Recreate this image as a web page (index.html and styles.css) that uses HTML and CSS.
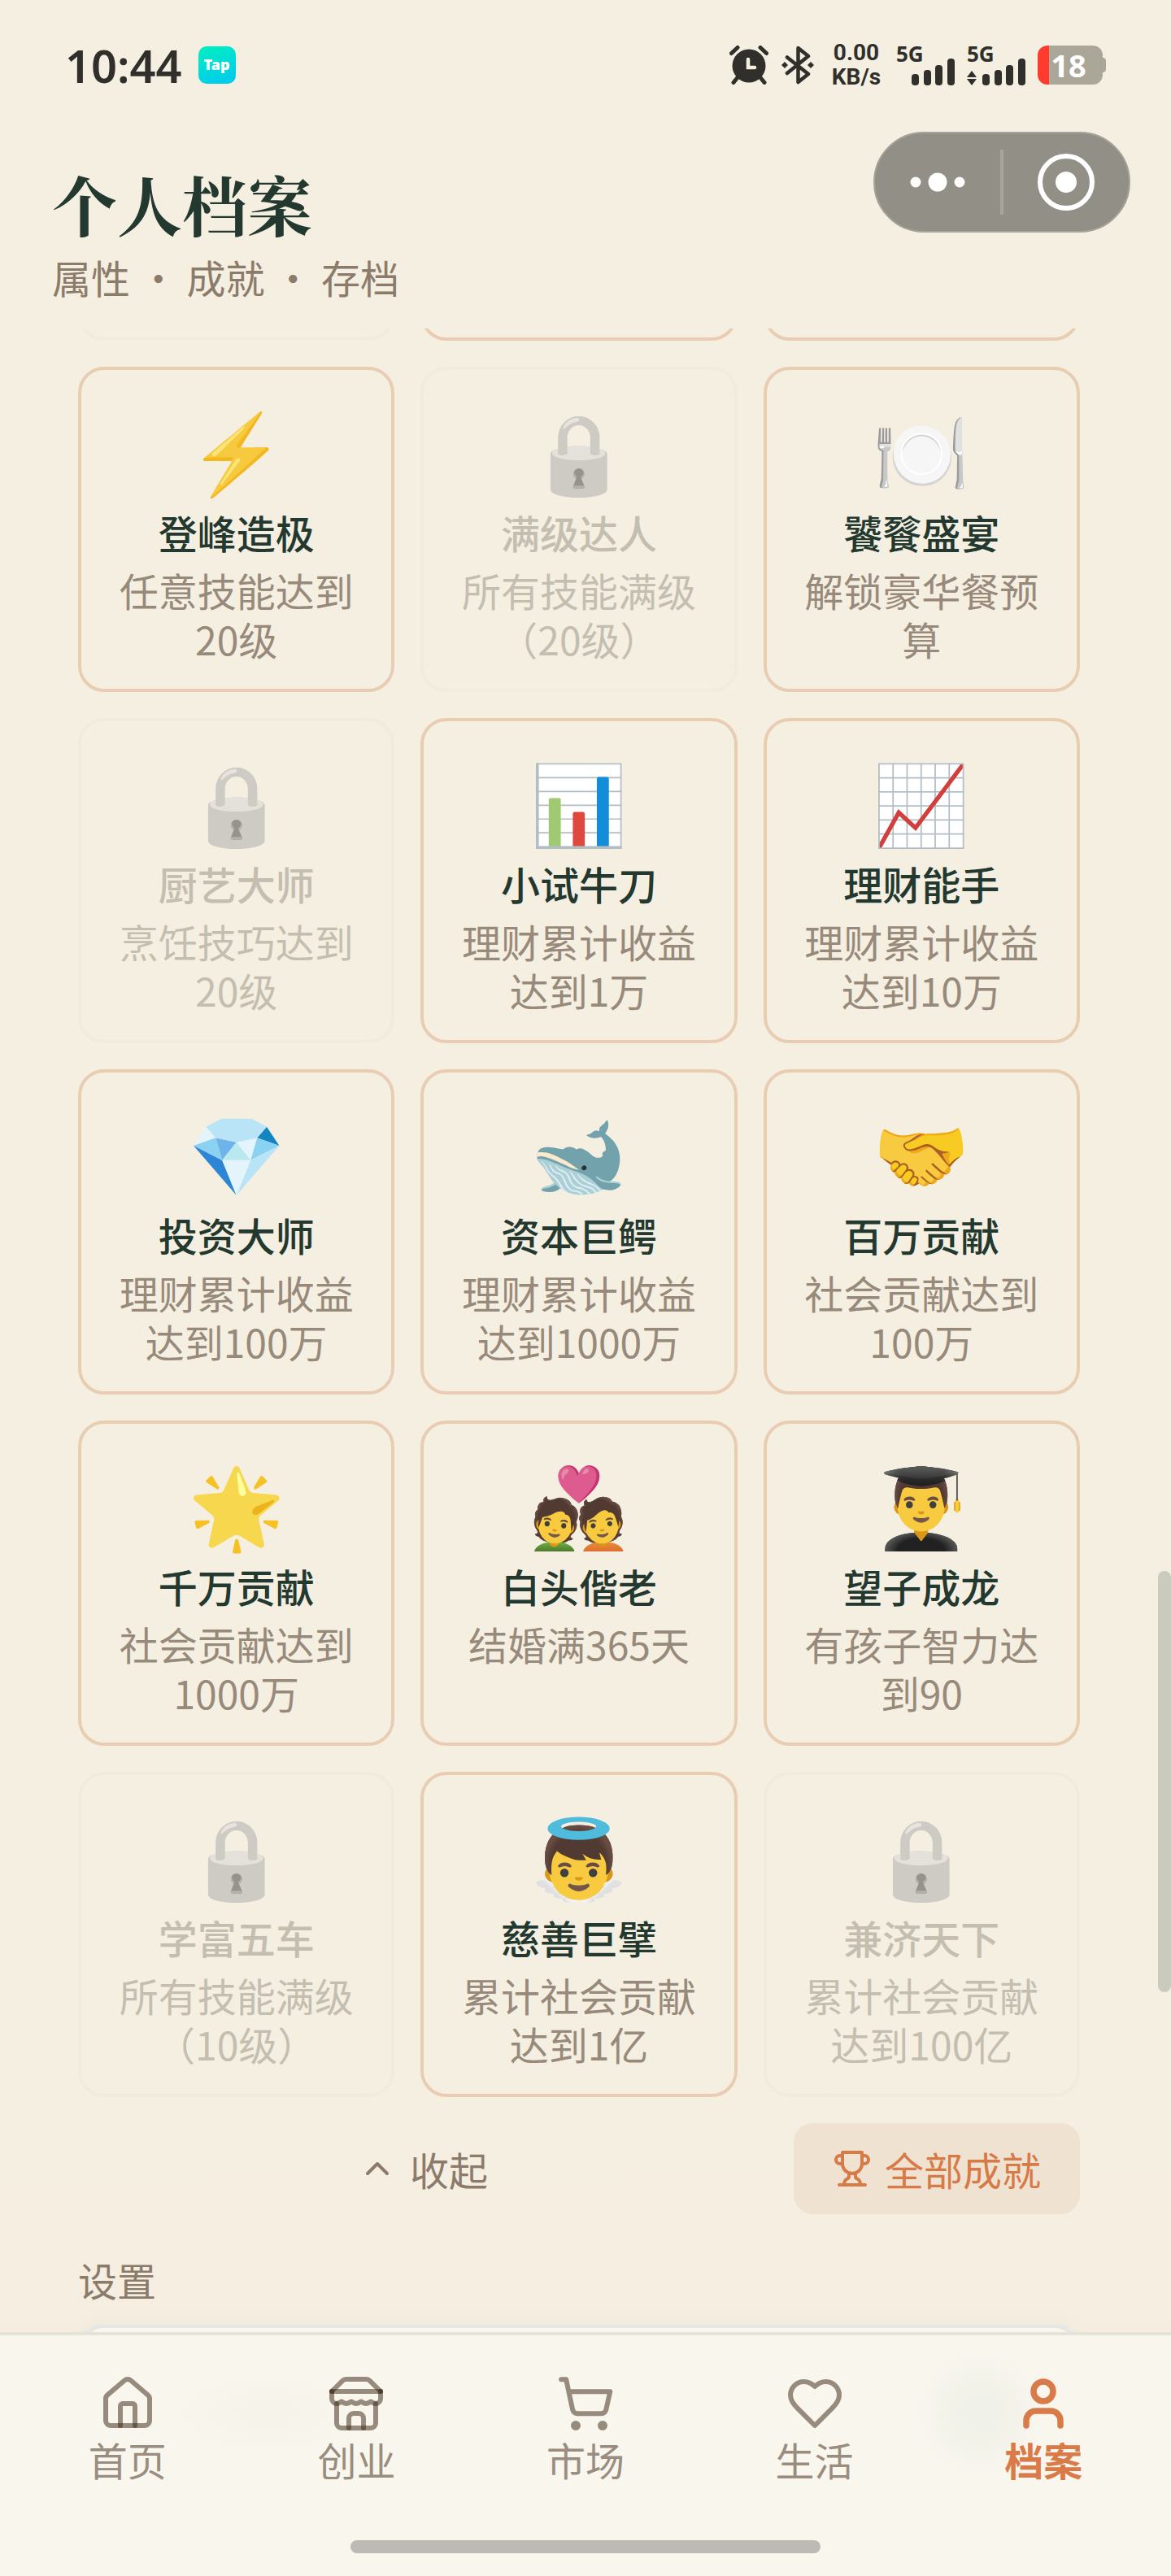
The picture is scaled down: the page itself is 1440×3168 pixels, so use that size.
FILE: index.html
```html
<!DOCTYPE html>
<html lang="zh-CN">
<head>
  <meta charset="UTF-8" />
  <meta name="viewport" content="width=device-width, initial-scale=1.0"/>
  <title>个人档案</title>
  <link rel="stylesheet" href="styles.css">
</head>

<body>
<div class="app">

<header>
  <div class="status-bar">
    <div class="status-left">
      <span class="time">10:44</span>
      <span class="tap-badge">Tap</span>
    </div>
    <div class="status-right">
      <svg class="alarm" viewBox="0 0 48 48" width="48" height="48">
        <circle cx="24" cy="25" r="20.500" fill="#302f2b"/>
        <path d="M2.500 9.500 10 2.500M45.500 9.500 38 2.500M11 38 5 45.500M37 38l6 7.500" stroke="#302f2b" stroke-width="5" stroke-linecap="round"/>
        <path d="M23 17v10h8" fill="none" stroke="#f5efe1" stroke-width="4.500" stroke-linecap="round"/>
      </svg>
      <svg class="bluetooth" viewBox="0 0 40 48" width="40" height="48">
        <path d="M7 14.500 33 35 20.500 45V3L33 13 7 34" fill="none" stroke="#302f2b" stroke-width="4.500" stroke-linecap="round" stroke-linejoin="round"/>
        <path d="M0 24l4-4 4 4-4 4zM32 24l4-4 4 4-4 4z" fill="#302f2b"/>
      </svg>
      <div class="speed">
        <span>0.00</span>
        <span>KB/s</span>
      </div>
      <span class="signal">
        <span>5G</span>
        <svg viewBox="0 0 73 34" width="73" height="34" fill="#302f2b">
          <rect x="19" y="20" width="9" height="14" rx="4"/>
          <rect x="34" y="15" width="9" height="19" rx="4"/>
          <rect x="48" y="9" width="9" height="25" rx="4"/>
          <rect x="63" y="1" width="9" height="33" rx="4"/>
        </svg>
      </span>
      <span class="signal">
        <span>5G</span>
        <svg viewBox="0 0 73 34" width="73" height="34" fill="#302f2b">
          <path d="M0 24l6-8 6 8zM0 26h12l-6 8z"/>
          <rect x="19" y="20" width="9" height="14" rx="4"/>
          <rect x="34" y="15" width="9" height="19" rx="4"/>
          <rect x="48" y="9" width="9" height="25" rx="4"/>
          <rect x="63" y="1" width="9" height="33" rx="4"/>
        </svg>
      </span>
      <span class="battery">18</span>
    </div>
  </div>

  <div class="title-bar">
    <div>
      <h1>个人档案</h1>
      <p class="subtitle">属性 ・ 成就 ・ 存档</p>
    </div>
    <div class="capsule">
      <button aria-label="更多">
        <svg viewBox="0 0 72 24" width="72" height="24" fill="#fff">
          <circle cx="9" cy="12" r="6.500"/><circle cx="36" cy="12" r="11.500"/><circle cx="63" cy="12" r="6.500"/>
        </svg>
      </button>
      <button aria-label="关闭">
        <svg viewBox="0 0 72 72" width="72" height="72">
          <circle cx="36" cy="36" r="32" fill="none" stroke="#fff" stroke-width="6"/>
          <circle cx="36" cy="36" r="13" fill="#fff"/>
        </svg>
      </button>
    </div>
  </div>
</header>

<main>
  <div class="grid">
    <div class="card above locked"></div>
    <div class="card above"></div>
    <div class="card above"></div>

    <div class="card">
      <div class="emoji">⚡</div>
      <h3>登峰造极</h3>
      <p>任意技能达到20级</p>
    </div>
    <div class="card locked">
      <div class="emoji">🔒</div>
      <h3>满级达人</h3>
      <p>所有技能满级（20级）</p>
    </div>
    <div class="card">
      <div class="emoji">🍽️</div>
      <h3>饕餮盛宴</h3>
      <p>解锁豪华餐预算</p>
    </div>

    <div class="card locked">
      <div class="emoji">🔒</div>
      <h3>厨艺大师</h3>
      <p>烹饪技巧达到20级</p>
    </div>
    <div class="card">
      <div class="emoji">📊</div>
      <h3>小试牛刀</h3>
      <p>理财累计收益达到1万</p>
    </div>
    <div class="card">
      <div class="emoji">📈</div>
      <h3>理财能手</h3>
      <p>理财累计收益达到10万</p>
    </div>

    <div class="card">
      <div class="emoji">💎</div>
      <h3>投资大师</h3>
      <p>理财累计收益达到100万</p>
    </div>
    <div class="card">
      <div class="emoji">🐋</div>
      <h3>资本巨鳄</h3>
      <p>理财累计收益达到1000万</p>
    </div>
    <div class="card">
      <div class="emoji">🤝</div>
      <h3>百万贡献</h3>
      <p>社会贡献达到100万</p>
    </div>

    <div class="card">
      <div class="emoji">🌟</div>
      <h3>千万贡献</h3>
      <p>社会贡献达到1000万</p>
    </div>
    <div class="card">
      <div class="emoji">💑</div>
      <h3>白头偕老</h3>
      <p>结婚满365天</p>
    </div>
    <div class="card">
      <div class="emoji">👨‍🎓</div>
      <h3>望子成龙</h3>
      <p>有孩子智力达到90</p>
    </div>

    <div class="card locked">
      <div class="emoji">🔒</div>
      <h3>学富五车</h3>
      <p>所有技能满级（10级）</p>
    </div>
    <div class="card">
      <div class="emoji">👼</div>
      <h3>慈善巨擘</h3>
      <p>累计社会贡献达到1亿</p>
    </div>
    <div class="card locked">
      <div class="emoji">🔒</div>
      <h3>兼济天下</h3>
      <p>累计社会贡献达到100亿</p>
    </div>
  </div>

  <div class="actions">
    <button class="collapse">
      <svg class="icon-small" viewBox="0 0 24 24"><path d="m18 15-6-6-6 6"/></svg>
      收起
    </button>
    <button class="all">
      <svg class="icon-small" viewBox="0 0 24 24">
        <path d="M6 9H4.500a2.500 2.500 0 0 1 0-5H6M18 9h1.500a2.500 2.500 0 0 0 0-5H18M4 22h16M10 14.660V17c0 .550-.470.980-.970 1.210C7.850 18.750 7 20.240 7 22M14 14.660V17c0 .550.470.980.970 1.210C16.150 18.750 17 20.240 17 22M18 2H6v7a6 6 0 0 0 12 0V2Z"/>
      </svg>
      全部成就
    </button>
  </div>

  <h2>设置</h2>
  <div class="settings"></div>
  <div class="scrollbar"></div>
</main>

<nav>
  <div class="tabs">
    <a href="#home">
      <svg viewBox="0 0 24 24">
        <path d="M15 21v-8a1 1 0 0 0-1-1h-4a1 1 0 0 0-1 1v8"/>
        <path d="M3 10a2 2 0 0 1 .709-1.528l7-5.999a2 2 0 0 1 2.582 0l7 5.999A2 2 0 0 1 21 10v9a2 2 0 0 1-2 2H5a2 2 0 0 1-2-2z"/>
      </svg>
      首页
    </a>
    <a href="#business">
      <svg viewBox="0 0 24 24">
        <path d="m2 7 4.410-4.410A2 2 0 0 1 7.830 2h8.340a2 2 0 0 1 1.420.590L22 7"/>
        <path d="M4 12v8a2 2 0 0 0 2 2h12a2 2 0 0 0 2-2v-8"/>
        <path d="M15 22v-4a2 2 0 0 0-2-2h-2a2 2 0 0 0-2 2v4"/>
        <path d="M2 7h20"/>
        <path d="M22 7v3a2 2 0 0 1-2 2a2.700 2.700 0 0 1-1.590-.630.700.700 0 0 0-.820 0A2.700 2.700 0 0 1 16 12a2.700 2.700 0 0 1-1.590-.630.700.700 0 0 0-.820 0A2.700 2.700 0 0 1 12 12a2.700 2.700 0 0 1-1.590-.630.700.700 0 0 0-.820 0A2.700 2.700 0 0 1 8 12a2.700 2.700 0 0 1-1.590-.630.700.700 0 0 0-.820 0A2.700 2.700 0 0 1 4 12a2 2 0 0 1-2-2V7"/>
      </svg>
      创业
    </a>
    <a href="#market">
      <svg viewBox="0 0 24 24">
        <circle cx="8" cy="21" r="1"/>
        <circle cx="19" cy="21" r="1"/>
        <path d="M2.050 2.050h2l2.660 12.420a2 2 0 0 0 2 1.580h9.780a2 2 0 0 0 1.950-1.570l1.650-7.430H5.120"/>
      </svg>
      市场
    </a>
    <a href="#life">
      <svg viewBox="0 0 24 24">
        <path d="M19 14c1.490-1.460 3-3.210 3-5.500A5.500 5.500 0 0 0 16.500 3c-1.760 0-3 .500-4.500 2-1.500-1.500-2.740-2-4.500-2A5.500 5.500 0 0 0 2 8.500c0 2.300 1.500 4.050 3 5.500l7 7Z"/>
      </svg>
      生活
    </a>
    <a href="#profile" class="active">
      <svg viewBox="0 0 24 24">
        <path d="M19 21v-2a4 4 0 0 0-4-4H9a4 4 0 0 0-4 4v2"/>
        <circle cx="12" cy="7" r="4"/>
      </svg>
      档案
    </a>
  </div>
  <div class="home-indicator"></div>
</nav>

</div>
</body>
</html>
```

FILE: styles.css
```css
* {
  box-sizing: border-box;
}

body {
  margin: 0;
  font-family: "Noto Sans CJK SC", sans-serif;
  font-size: 48px;
  line-height: 60px;
  background: linear-gradient(#f5efe1 80%, #f5ede0);
  color: #8b7b6b;
}

h1, h2, h3, p {
  margin: 0;
}

button {
  border: none;
  background: none;
  padding: 0;
  font: inherit;
  color: inherit;
  display: flex;
  align-items: center;
  justify-content: center;
  cursor: pointer;
}

.app {
  height: 100vh;
  display: flex;
  flex-direction: column;
}

header {
  padding-top: 56px;
}

/* status bar */
.status-bar {
  height: 48px;
  padding: 0 80px;
  display: flex;
  justify-content: space-between;
  align-items: center;
  font-family: "Noto Sans", sans-serif;
  color: #302f2b;
}

.status-left, .status-right {
  display: flex;
  align-items: center;
}

.status-left {
  gap: 20px;
}

.time {
  font-size: 56px;
  font-weight: 600;
}

.tap-badge {
  width: 46px;
  height: 46px;
  border-radius: 10px;
  background: linear-gradient(160deg, #00f0c0, #00c8f0);
  color: #fff;
  font-size: 18px;
  font-weight: 900;
  line-height: 44px;
  text-align: center;
}

.alarm {
  margin-right: 16px;
}

.bluetooth {
  margin-right: 20px;
}

.speed {
  width: 64px;
  margin-right: 17px;
  font-family: Roboto, sans-serif;
  font-size: 28px;
  font-weight: 700;
  line-height: 30px;
  text-align: center;
}

.speed span {
  display: block;
}

.signal {
  width: 73px;
  height: 50px;
  margin-right: 14px;
  position: relative;
  font-size: 26px;
  font-weight: 700;
  line-height: 22px;
}

.signal span {
  display: block;
}

.signal svg {
  position: absolute;
  left: 0;
  bottom: 0;
}

.battery {
  width: 80px;
  height: 48px;
  margin-right: 4px;
  padding-right: 4px;
  position: relative;
  border-radius: 12px;
  background: linear-gradient(90deg, #ff3b30 14px, #aaa799 14px);
  color: #fff;
  font-size: 38px;
  font-weight: 700;
  line-height: 48px;
  text-align: center;
}

.battery::after {
  content: "";
  position: absolute;
  top: 15px;
  right: -4px;
  width: 4px;
  height: 18px;
  border-radius: 0 4px 4px 0;
  background: #aaa799;
}

/* page title */
.title-bar {
  padding: 58px 50px 34px 64px;
  display: flex;
  justify-content: space-between;
  align-items: flex-start;
}

h1 {
  margin: 40px 0 12px;
  font-family: "Noto Serif CJK SC", "Noto Serif SC", "Source Han Serif SC", "Noto Sans CJK SC", serif;
  font-size: 80px;
  font-weight: 700;
  line-height: 96px;
  color: #23382f;
}

.capsule {
  width: 316px;
  height: 124px;
  display: flex;
  align-items: center;
  border: 2px solid #a5a39b;
  border-radius: 62px;
  background: #928f86;
}

.capsule button {
  flex: 1;
  height: 80px;
}

.capsule button + button {
  border-left: 4px solid #a8a59d;
}

/* achievements */
main {
  flex: 1;
  min-height: 0;
  padding: 0 112px 0 96px;
  position: relative;
  overflow: hidden;
}

.grid {
  margin-top: -65px;
  display: grid;
  grid-template-columns: repeat(3, 1fr);
  gap: 32px;
}

.card {
  padding: 32px;
  border: 4px solid #e9cdb3;
  border-radius: 32px;
  text-align: center;
}

.card.above {
  height: 80px;
}

.emoji {
  height: 134px;
  font-family: "Noto Color Emoji", sans-serif;
  font-size: 96px;
  line-height: 144px;
  filter: saturate(0.85);
}

.card h3 {
  margin-bottom: 8px;
  font-size: 48px;
  font-weight: 500;
  line-height: 66px;
  color: #23382f;
}

.card p {
  color: #988a7b;
}

.card.locked {
  border-color: #f2eadd;
}

.card.locked .emoji {
  filter: grayscale(1);
  opacity: 0.5;
}

.card.locked h3, .card.locked p {
  color: #c4beb1;
}

.actions {
  margin-top: 32px;
  display: flex;
  gap: 32px;
}

.actions button {
  height: 112px;
  padding: 0 48px;
  gap: 16px;
  border-radius: 24px;
}

.collapse {
  flex: 1;
}

.all {
  background: #f0e2d1;
  color: #d67a47;
}

.icon-small {
  width: 48px;
  height: 48px;
  fill: none;
  stroke: currentColor;
  stroke-width: 2;
  stroke-linecap: round;
  stroke-linejoin: round;
}

h2 {
  margin: 48px 0 24px;
  font-size: 48px;
  font-weight: 400;
  line-height: 64px;
}

.settings {
  height: 400px;
  border: 4px solid #e5e6e6;
  border-radius: 32px;
  background: #f9f6ed;
  box-shadow: 0 0 12px rgba(220, 225, 205, 0.6);
}

.scrollbar {
  position: absolute;
  top: 1528px;
  right: 0;
  width: 16px;
  height: 518px;
  border-radius: 8px;
  background: #cbcbbd;
}

/* bottom tabs */
nav {
  padding: 48px 16px 28px;
  border-top: 4px solid #e4e3d9;
  background:
    radial-gradient(circle at 1205px 96px, #f0f1e8 20px, transparent 80px),
    radial-gradient(ellipse 120px 50px at 330px 96px, #f5f3ea 20%, transparent),
    #f9f6ee;
}

.tabs {
  display: flex;
}

.tabs a {
  flex: 1;
  display: flex;
  flex-direction: column;
  align-items: center;
  gap: 8px;
  line-height: 48px;
  color: #998d80;
  text-decoration: none;
}

.tabs svg {
  width: 72px;
  height: 72px;
  fill: none;
  stroke: rgba(60, 40, 22, 0.52);
  stroke-width: 2;
  stroke-linecap: round;
  stroke-linejoin: round;
}

.tabs .active {
  color: #d97b48;
  font-weight: 700;
}

.tabs .active svg {
  stroke: #d97b48;
  stroke-width: 2.5;
}

.home-indicator {
  width: 41%;
  height: 16px;
  margin: 76px auto 0;
  border-radius: 8px;
  background: #bbbab4;
}
```
